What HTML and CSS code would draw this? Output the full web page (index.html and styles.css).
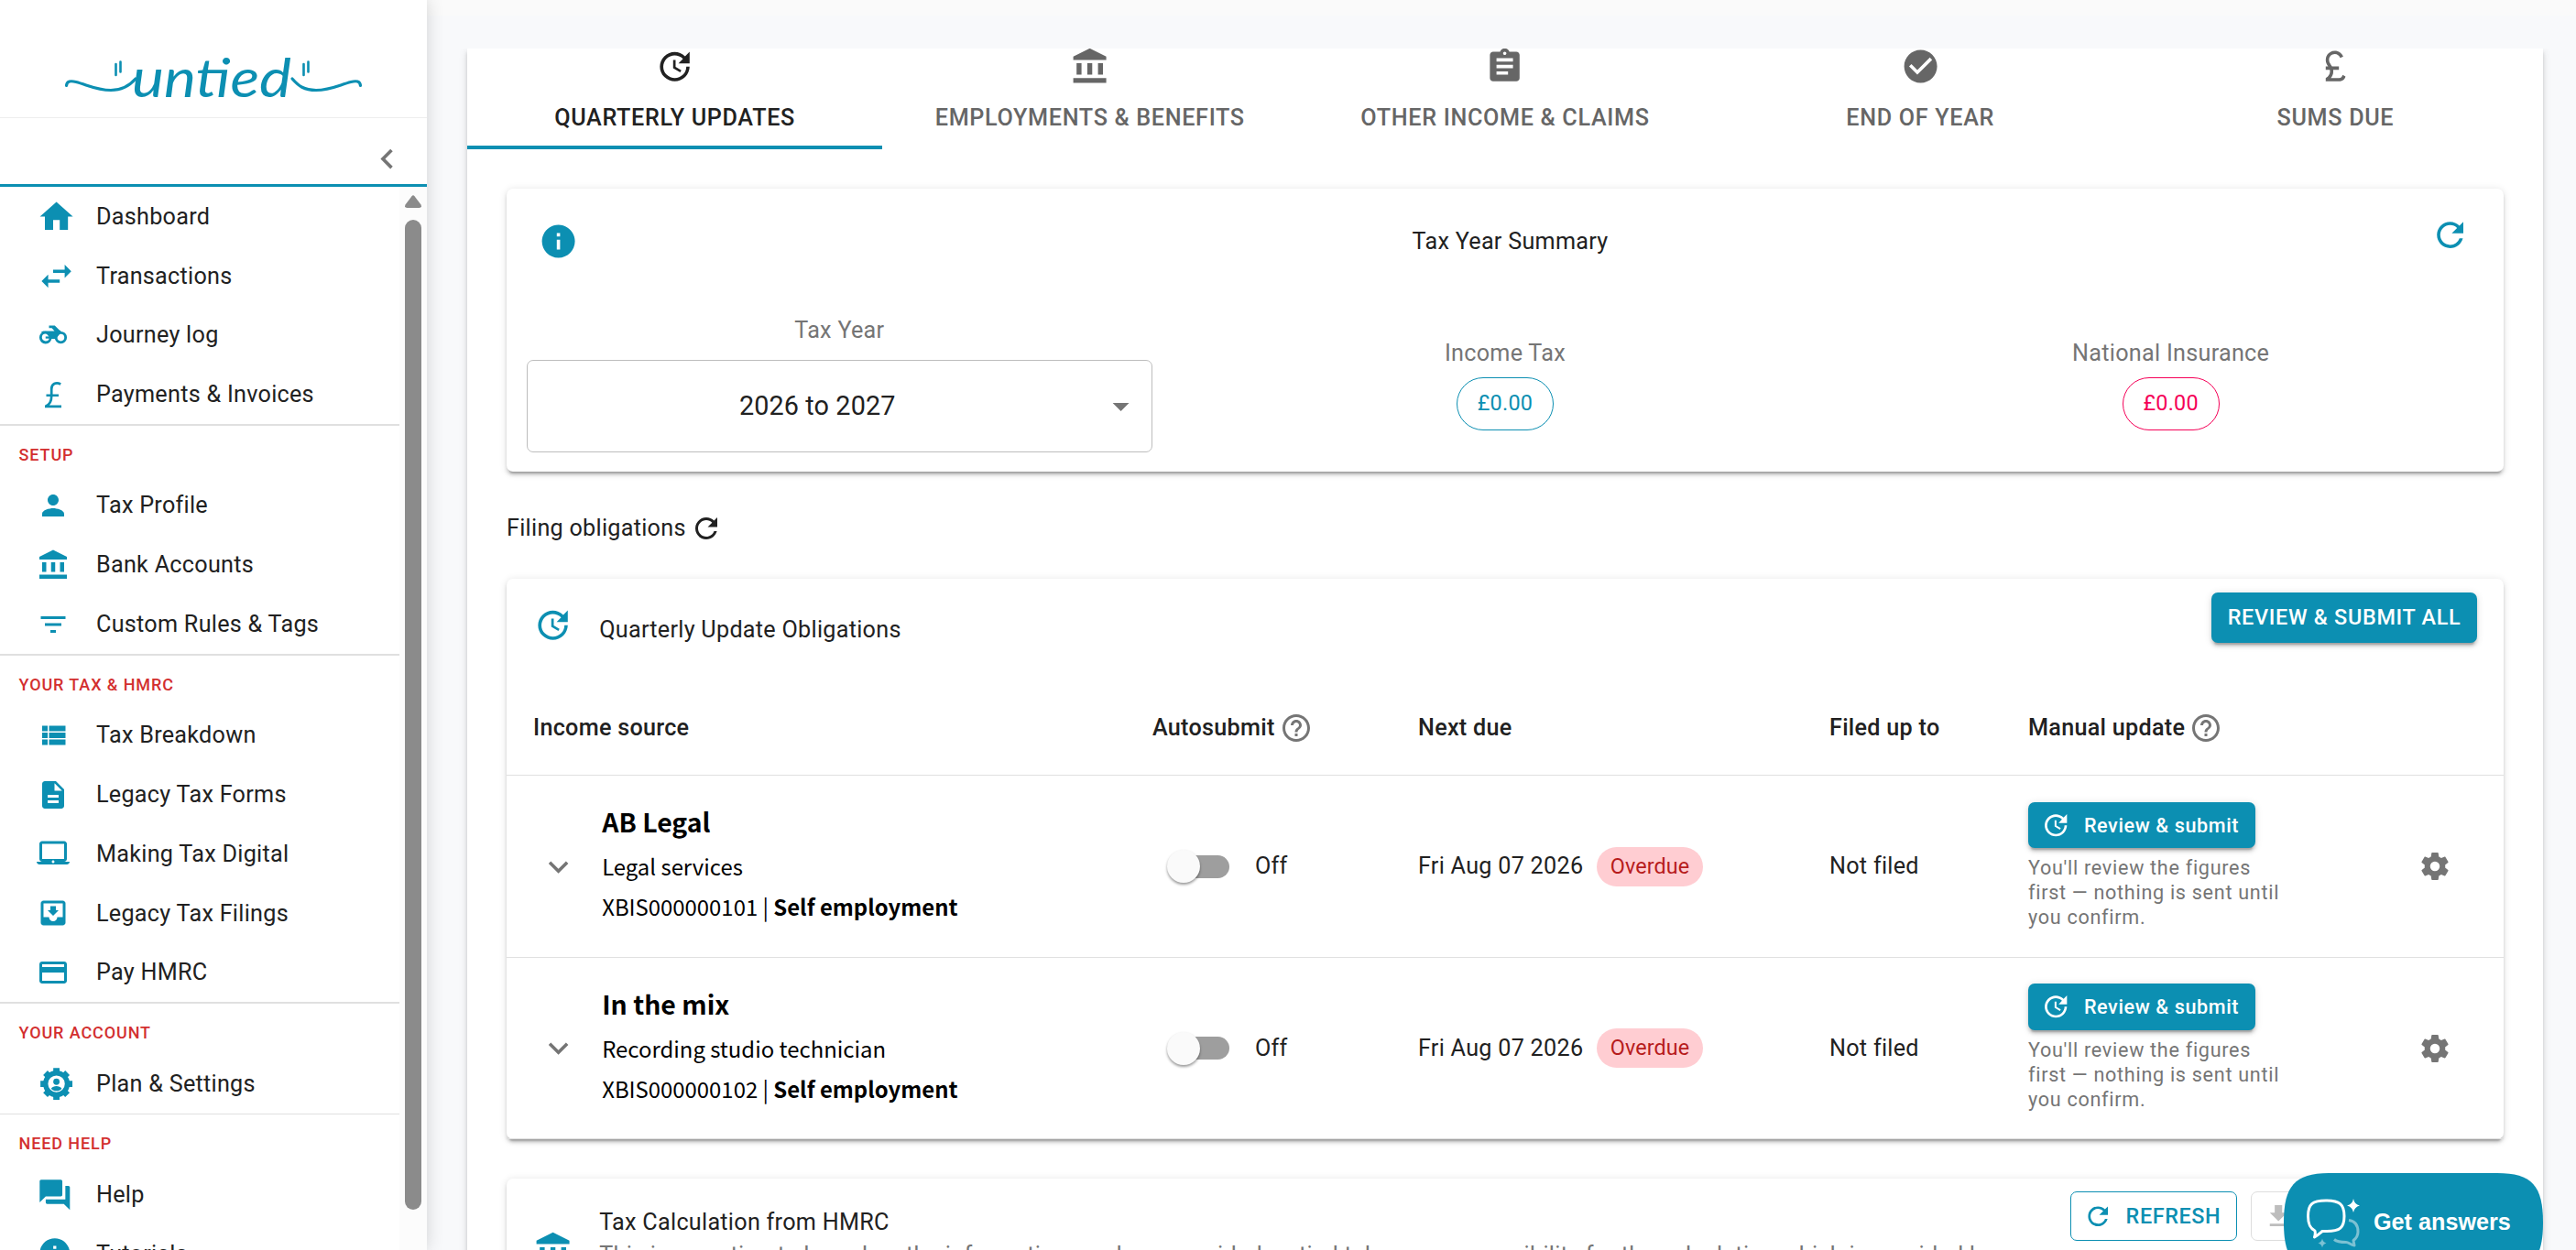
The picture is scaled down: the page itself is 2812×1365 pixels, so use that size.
FILE: index.html
```html
<!DOCTYPE html>
<html lang="en">

<head>
  <meta charset="UTF-8" />
  <title>untied - Quarterly updates</title>
  <link rel="stylesheet" href="styles.css">
</head>

<body>

<!-- Icon sprite -->
<svg class="sprite" xmlns="http://www.w3.org/2000/svg">
  <symbol id="i-home" viewBox="0 0 24 24"><path d="M10 20v-6h4v6h5v-8h3L12 3 2 12h3v8z"/></symbol>
  <symbol id="i-swap" viewBox="0 0 24 24"><path d="M6.99 11L3 15l3.99 4v-3H14v-2H6.99v-3zM21 9l-3.99-4v3H10v2h7.01v3L21 9z"/></symbol>
  <symbol id="i-bike" viewBox="0 0 24 24">
    <path d="M9 5h4.2l3.2 3.2 1.3.8-.5 1.6L14 14.6h-3.6L7 10.8 3 9.7 5 9h8l-2-2.2H9z"/>
    <g fill="none" stroke="currentColor" stroke-width="1.9">
      <circle cx="6.5" cy="13.7" r="3.6"/>
      <circle cx="17.6" cy="13.7" r="3.5"/>
      <path d="M6.5 13.7h4" stroke-width="1.5"/>
    </g>
  </symbol>
  <symbol id="i-gbp" viewBox="0 0 24 24"><path fill="none" stroke="currentColor" stroke-width="1.8" d="M17.5 4.3C14 2.6 10.8 4 10.8 8v5c0 3.5-1.5 6.300-4.100 7.300M7 12.500h9M6 20.600h12"/></symbol>
  <symbol id="i-pound" viewBox="0 0 24 24"><path d="M14 21c1.93 0 3.62-1.17 4-3l-1.75-.88C16 18.21 15.33 19 14 19H9.1c.83-1 1.5-2.34 1.5-4 0-.35-.03-.69-.08-1H14v-2H9.82C9 10.42 8 9.6 8 8c0-1.93 1.57-3.5 3.5-3.5 1.5 0 2.79.95 3.28 2.28L16.63 6c-.8-2.05-2.79-3.5-5.13-3.5C8.46 2.5 6 4.96 6 8c0 1.78.79 2.9 1.49 4H6v2h2.47c.08.31.13.64.13 1 0 2.7-2.6 4-2.6 4v2h8z"/></symbol>
  <symbol id="i-person" viewBox="0 0 24 24"><path d="M12 12c2.21 0 4-1.79 4-4s-1.790-4-4-4-4 1.790-4 4 1.790 4 4 4zm0 2c-2.670 0-8 1.340-8 4v2h16v-2c0-2.660-5.330-4-8-4z"/></symbol>
  <symbol id="i-bank" viewBox="0 0 24 24"><path d="M12 1L2 6v2h20V6zM4 10v7h3v-7zM10.500 10v7h3v-7zM17 10v7h3v-7zM2 19h20v3H2z"/></symbol>
  <symbol id="i-filter" viewBox="0 0 24 24"><path d="M10 18h4v-2h-4v2zM3 6v2h18V6H3zm3 7h12v-2H6v2z"/></symbol>
  <symbol id="i-list" viewBox="0 0 24 24"><path d="M4 14h4v-4H4v4zm0 5h4v-4H4v4zM4 9h4V5H4v4zm5 5h12v-4H9v4zm0 5h12v-4H9v4zM9 5v4h12V5H9z"/></symbol>
  <symbol id="i-doc" viewBox="0 0 24 24"><path d="M14 2H6c-1.100 0-1.990.9-1.990 2L4 20c0 1.100.89 2 1.990 2H18c1.100 0 2-.9 2-2V8l-6-6zm2 16H8v-2h8v2zm0-4H8v-2h8v2zm-3-5V3.500L18.500 9H13z"/></symbol>
  <symbol id="i-laptop" viewBox="0 0 24 24"><path d="M20 18c1.100 0 1.990-.9 1.990-2L22 5c0-1.100-.9-2-2-2H4c-1.100 0-2 .9-2 2v11c0 1.100.9 2 2 2H0c0 1.100.9 2 2 2h20c1.100 0 2-.9 2-2h-4zM4 5h16v11H4V5zm8 14c-.55 0-1-.45-1-1s.45-1 1-1 1 .45 1 1-.45 1-1 1z"/></symbol>
  <symbol id="i-inbox" viewBox="0 0 24 24"><path d="M19 3H4.990c-1.110 0-1.980.9-1.980 2L3 19c0 1.100.88 2 1.990 2H19c1.100 0 2-.9 2-2V5c0-1.100-.9-2-2-2zm0 12h-4c0 1.660-1.350 3-3 3s-3-1.340-3-3H4.990V5H19v10zm-3-5h-2V7h-4v3H8l4 4 4-4z"/></symbol>
  <symbol id="i-card" viewBox="0 0 24 24"><path d="M20 4H4c-1.110 0-1.990.89-1.990 2L2 18c0 1.110.89 2 2 2h16c1.110 0 2-.89 2-2V6c0-1.110-.89-2-2-2zm0 14H4v-6h16v6zm0-10H4V6h16v2z"/></symbol>
  <symbol id="i-plan" viewBox="0 0 24 24">
    <circle cx="12" cy="12" r="6.600" fill="none" stroke="currentColor" stroke-width="3"/>
    <path stroke="currentColor" stroke-width="3.800" stroke-linejoin="round" d="M12 2.300v3M12 18.700v3M2.300 12h3M18.700 12h3M5.300 5.300l2 2M16.700 16.700l2 2M5.300 18.700l2-2M16.700 7.300l2-2"/>
    <circle cx="12" cy="10.700" r="1.900"/>
    <path d="M8.800 14.900c.6-1.200 2-1.600 3.200-1.600s2.600.4 3.200 1.600C14.400 15.900 13.300 16.300 12 16.300s-2.400-.4-3.200-1.400z"/>
  </symbol>
  <symbol id="i-forum" viewBox="0 0 24 24"><path d="M21 6h-2v9H6v2c0 .55.45 1 1 1h11l4 4V7c0-.55-.45-1-1-1zm-4 6V3c0-.55-.45-1-1-1H3c-.55 0-1 .45-1 1v14l4-4h10c.55 0 1-.45 1-1z"/></symbol>
  <symbol id="i-info" viewBox="0 0 24 24"><path d="M12 2C6.480 2 2 6.480 2 12s4.480 10 10 10 10-4.480 10-10S17.520 2 12 2zm1 15h-2v-6h2v6zm0-8h-2V7h2v2z"/></symbol>
  <symbol id="i-left" viewBox="0 0 24 24"><path d="M15.410 7.410L14 6l-6 6 6 6 1.410-1.410L10.830 12z"/></symbol>
  <symbol id="i-down" viewBox="0 0 24 24"><path d="M7.410 8.590L12 13.170l4.590-4.580L18 10l-6 6-6-6 1.410-1.410z"/></symbol>
  <symbol id="i-drop" viewBox="0 0 24 24"><path d="M7 10l5 5 5-5z"/></symbol>
  <symbol id="i-update" viewBox="0 0 24 24"><path d="M21 10.120h-6.780l2.740-2.820c-2.730-2.700-7.150-2.800-9.880-.1-2.730 2.710-2.730 7.080 0 9.790s7.150 2.710 9.880 0C18.320 15.650 19 14.080 19 12.100h2c0 1.980-.88 4.550-2.640 6.290-3.510 3.480-9.210 3.480-12.720 0-3.500-3.470-3.530-9.110-.02-12.580s9.140-3.470 12.650 0L21 3v7.120zM12.500 8v4.250l3.500 2.080-.72 1.210L11 13V8h1.500z"/></symbol>
  <symbol id="i-refresh" viewBox="0 0 24 24"><path d="M17.650 6.350C16.200 4.900 14.210 4 12 4c-4.420 0-7.990 3.580-7.990 8s3.570 8 7.990 8c3.730 0 6.840-2.550 7.730-6h-2.080c-.82 2.330-3.040 4-5.650 4-3.310 0-6-2.690-6-6s2.690-6 6-6c1.660 0 3.140.69 4.220 1.780L13 11h7V4l-2.350 2.350z"/></symbol>
  <symbol id="i-assign" viewBox="0 0 24 24"><path d="M19 3h-4.180C14.400 1.840 13.300 1 12 1c-1.300 0-2.400.84-2.820 2H5c-1.100 0-2 .9-2 2v14c0 1.100.9 2 2 2h14c1.100 0 2-.9 2-2V5c0-1.100-.9-2-2-2zm-7 0c.55 0 1 .45 1 1s-.45 1-1 1-1-.45-1-1 .45-1 1-1zm2 14H7v-2h7v2zm3-4H7v-2h10v2zm0-4H7V7h10v2z"/></symbol>
  <symbol id="i-check" viewBox="0 0 24 24"><path d="M12 2C6.480 2 2 6.480 2 12s4.480 10 10 10 10-4.480 10-10S17.520 2 12 2zm-2 15l-5-5 1.410-1.410L10 14.170l7.590-7.590L19 8l-9 9z"/></symbol>
  <symbol id="i-help" viewBox="0 0 24 24"><path d="M11 18h2v-2h-2v2zm1-16C6.480 2 2 6.480 2 12s4.480 10 10 10 10-4.480 10-10S17.520 2 12 2zm0 18c-4.410 0-8-3.590-8-8s3.590-8 8-8 8 3.590 8 8-3.590 8-8 8zm0-14c-2.210 0-4 1.790-4 4h2c0-1.100.9-2 2-2s2 .9 2 2c0 2-3 1.750-3 5h2c0-2.250 3-2.500 3-5 0-2.210-1.790-4-4-4z"/></symbol>
  <symbol id="i-cog" viewBox="0 0 24 24"><path d="M12 15.500A3.500 3.500 0 0 1 8.500 12 3.500 3.500 0 0 1 12 8.500a3.500 3.500 0 0 1 3.500 3.500 3.500 3.500 0 0 1-3.500 3.500m7.430-2.530c.04-.32.07-.64.07-.97 0-.33-.03-.66-.07-1l2.110-1.630c.19-.15.24-.42.12-.64l-2-3.460c-.12-.22-.39-.31-.61-.22l-2.490 1c-.52-.39-1.060-.73-1.690-.98l-.37-2.650A.506.506 0 0 0 14 2h-4c-.25 0-.46.18-.5.42l-.37 2.650c-.63.25-1.170.59-1.690.98l-2.490-1c-.22-.09-.49 0-.61.22l-2 3.460c-.13.22-.07.49.12.64L4.570 11c-.04.34-.07.67-.07 1 0 .33.03.65.07.97l-2.110 1.660c-.19.15-.25.42-.12.64l2 3.460c.12.22.39.3.61.22l2.490-1.010c.52.4 1.060.74 1.690.99l.37 2.650c.04.24.25.42.5.42h4c.25 0 .46-.18.5-.42l.37-2.650c.63-.26 1.170-.59 1.690-.99l2.490 1.010c.22.08.49 0 .61-.22l2-3.460c.12-.22.07-.49-.12-.64l-2.110-1.660z"/></symbol>
  <symbol id="i-download" viewBox="0 0 24 24"><path d="M5 20h14v-2H5m14-9h-4V3H9v6H5l7 7 7-7z"/></symbol>
</svg>

<div class="app">

  <!-- Sidebar -->
  <aside class="sidebar">
    <div class="logo">
      <svg viewBox="0 0 466 128" width="466" height="128">
        <g fill="none" stroke="currentColor" stroke-width="3.200" stroke-linecap="round">
          <path d="M72.500 93.500C73 88.500 77 88 83 89.500C96 93 106 98.500 121 98.500C134 98.500 142 93 148 86"/>
          <path d="M393.500 93.500C393 88.500 389 88 383 89.500C370 93 360 98.500 345 98.500C332 98.500 326 94 319 86"/>
          <path d="M126.500 70v12M131.500 67.500v11M331.500 70v12M336.500 67.500v11" stroke-width="2.600"/>
        </g>
        <text class="wordmark" x="144" y="106" textLength="174" lengthAdjust="spacingAndGlyphs">untied</text>
      </svg>
    </div>
    <div class="collapse"><svg class="icon lg"><use href="#i-left"/></svg></div>

    <div class="nav-wrap">
      <nav class="nav">
        <a class="nav-item"><svg class="icon lg"><use href="#i-home"/></svg><span>Dashboard</span></a>
        <a class="nav-item"><svg class="icon lg"><use href="#i-swap"/></svg><span>Transactions</span></a>
        <a class="nav-item"><svg class="icon"><use href="#i-bike"/></svg><span>Journey log</span></a>
        <a class="nav-item"><svg class="icon"><use href="#i-gbp"/></svg><span>Payments &amp; Invoices</span></a>
        <div class="divider"></div>
        <div class="nav-title">SETUP</div>
        <a class="nav-item"><svg class="icon"><use href="#i-person"/></svg><span>Tax Profile</span></a>
        <a class="nav-item"><svg class="icon"><use href="#i-bank"/></svg><span>Bank Accounts</span></a>
        <a class="nav-item"><svg class="icon"><use href="#i-filter"/></svg><span>Custom Rules &amp; Tags</span></a>
        <div class="divider"></div>
        <div class="nav-title">YOUR TAX &amp; HMRC</div>
        <a class="nav-item"><svg class="icon"><use href="#i-list"/></svg><span>Tax Breakdown</span></a>
        <a class="nav-item"><svg class="icon"><use href="#i-doc"/></svg><span>Legacy Tax Forms</span></a>
        <a class="nav-item"><svg class="icon"><use href="#i-laptop"/></svg><span>Making Tax Digital</span></a>
        <a class="nav-item"><svg class="icon"><use href="#i-inbox"/></svg><span>Legacy Tax Filings</span></a>
        <a class="nav-item"><svg class="icon"><use href="#i-card"/></svg><span>Pay HMRC</span></a>
        <div class="divider"></div>
        <div class="nav-title">YOUR ACCOUNT</div>
        <a class="nav-item"><svg class="icon lg"><use href="#i-plan"/></svg><span>Plan &amp; Settings</span></a>
        <div class="divider"></div>
        <div class="nav-title">NEED HELP</div>
        <a class="nav-item"><svg class="icon md"><use href="#i-forum"/></svg><span>Help</span></a>
        <a class="nav-item"><svg class="icon md"><use href="#i-info"/></svg><span>Tutorials</span></a>
      </nav>
      <div class="scrollbar">
        <svg class="scroll-up" viewBox="0 0 18 14"><path d="M7.500 1.200Q9-.6 10.500 1.200L17.500 10.500Q19 14 15.500 14H2.500Q-1 14 .5 10.500z"/></svg>
        <div class="scroll-thumb"></div>
      </div>
    </div>
  </aside>

  <!-- Main content -->
  <main class="main">
    <div class="topbar"></div>
    <div class="panel">
      <div class="tabs">
        <div class="tab active"><svg class="icon lg"><use href="#i-update"/></svg>QUARTERLY UPDATES</div>
        <div class="tab"><svg class="icon lg"><use href="#i-bank"/></svg>EMPLOYMENTS &amp; BENEFITS</div>
        <div class="tab"><svg class="icon lg"><use href="#i-assign"/></svg>OTHER INCOME &amp; CLAIMS</div>
        <div class="tab"><svg class="icon lg"><use href="#i-check"/></svg>END OF YEAR</div>
        <div class="tab"><svg class="icon lg"><use href="#i-pound"/></svg>SUMS DUE</div>
      </div>

      <div class="content">
        <!-- Tax year summary -->
        <section class="card summary">
          <div class="summary-head">
            <svg class="icon lg teal"><use href="#i-info"/></svg>
            <div class="summary-title">Tax Year Summary</div>
            <svg class="icon lg teal summary-refresh"><use href="#i-refresh"/></svg>
          </div>
          <div class="summary-cols">
            <div class="summary-col">
              <div class="label">Tax Year</div>
              <div class="select"><span>2026 to 2027</span><svg class="icon lg"><use href="#i-drop"/></svg></div>
            </div>
            <div class="summary-col">
              <div class="label">Income Tax</div>
              <div class="amount">£0.00</div>
            </div>
            <div class="summary-col">
              <div class="label">National Insurance</div>
              <div class="amount pink">£0.00</div>
            </div>
          </div>
        </section>

        <div class="filing">Filing obligations <svg class="icon"><use href="#i-refresh"/></svg></div>

        <!-- Obligations -->
        <section class="card obligations">
          <div class="ob-head">
            <svg class="icon lg teal"><use href="#i-update"/></svg>
            <div class="ob-title">Quarterly Update Obligations</div>
            <button class="btn btn-all">REVIEW &amp; SUBMIT ALL</button>
          </div>
          <table class="ob-table">
            <colgroup>
              <col class="c-source"><col class="c-auto"><col class="c-due"><col class="c-filed"><col class="c-manual"><col>
            </colgroup>
            <thead>
              <tr>
                <th class="first">Income source</th>
                <th><span class="th-help">Autosubmit <svg class="icon"><use href="#i-help"/></svg></span></th>
                <th>Next due</th>
                <th>Filed up to</th>
                <th><span class="th-help">Manual update <svg class="icon"><use href="#i-help"/></svg></span></th>
                <th></th>
              </tr>
            </thead>
            <tbody>
              <tr>
                <td>
                  <div class="source">
                    <svg class="icon lg"><use href="#i-down"/></svg>
                    <div class="source-text">
                      <div class="source-name">AB Legal</div>
                      <div>Legal services</div>
                      <div>XBIS000000101 | <b>Self employment</b></div>
                    </div>
                  </div>
                </td>
                <td><div class="auto"><span class="switch"><i></i></span>Off</div></td>
                <td><div class="due">Fri Aug 07 2026 <span class="overdue">Overdue</span></div></td>
                <td>Not filed</td>
                <td>
                  <button class="btn btn-review"><svg class="icon sm"><use href="#i-update"/></svg>Review &amp; submit</button>
                  <div class="hint">You'll review the figures first — nothing is sent until you confirm.</div>
                </td>
                <td class="cog"><svg class="icon"><use href="#i-cog"/></svg></td>
              </tr>
              <tr>
                <td>
                  <div class="source">
                    <svg class="icon lg"><use href="#i-down"/></svg>
                    <div class="source-text">
                      <div class="source-name">In the mix</div>
                      <div>Recording studio technician</div>
                      <div>XBIS000000102 | <b>Self employment</b></div>
                    </div>
                  </div>
                </td>
                <td><div class="auto"><span class="switch"><i></i></span>Off</div></td>
                <td><div class="due">Fri Aug 07 2026 <span class="overdue">Overdue</span></div></td>
                <td>Not filed</td>
                <td>
                  <button class="btn btn-review"><svg class="icon sm"><use href="#i-update"/></svg>Review &amp; submit</button>
                  <div class="hint">You'll review the figures first — nothing is sent until you confirm.</div>
                </td>
                <td class="cog"><svg class="icon"><use href="#i-cog"/></svg></td>
              </tr>
            </tbody>
          </table>
        </section>

        <!-- Tax calculation -->
        <section class="card calc">
          <svg class="icon lg teal"><use href="#i-bank"/></svg>
          <div class="calc-text">
            <div>Tax Calculation from HMRC</div>
            <div class="calc-sub">This is an estimate based on the information you have provided, untied takes no responsibility for the calculation which is provided by</div>
          </div>
          <div class="calc-actions">
            <button class="btn-outline"><svg class="icon sm"><use href="#i-refresh"/></svg>REFRESH</button>
            <button class="btn-outline disabled"><svg class="icon sm"><use href="#i-download"/></svg></button>
          </div>
        </section>
      </div>
    </div>
  </main>
</div>

<!-- Chat launcher -->
<div class="chat">
  <svg class="chat-bg" viewBox="0 0 283 108" preserveAspectRatio="none"><path d="M0 54C0 14 12 0 50 0H233C271 0 283 14 283 54S271 108 233 108H50C12 108 0 94 0 54z"/></svg>
  <svg class="chat-icon" viewBox="0 0 58 54">
    <path class="bubble" d="M9 35C3 32 1.500 27 1.500 19C1.500 6 6 2 21 2S41 6 41 19S36 35.500 22 35.500H17C14 38 12 40 8.500 42C9.500 39 9.500 37 9 35z"/>
    <path class="bubble faint" d="M46 23.500C54 24.500 56 30 56 36C56 40 54.500 43 51 45.500L52 51C48 50.500 46 47.500 43 47.500C37 47.500 33 47 30 44.500"/>
    <path d="M51 0Q52 6 58 7.500Q52 9 51 15Q50 9 44 7.500Q50 6 51 0z"/>
    <path class="faint-fill" d="M17 43.500Q17.700 47.500 21.500 48.500Q17.700 49.500 17 53.500Q16.300 49.500 12.500 48.500Q16.300 47.500 17 43.500z"/>
  </svg>
  <span>Get answers</span>
</div>

</body>
</html>
```
FILE: styles.css
```css
* {
  box-sizing: border-box;
}
body {
  margin: 0;
  height: 1365px;
  overflow: hidden;
  font-family: Roboto, "Liberation Sans", sans-serif;
  font-size: 25.2px;
  letter-spacing: 0.27px;
  line-height: 36px;
  color: #212121;
  background: #f8f9fb;
}
button {
  font-family: inherit;
  border: none;
  padding: 0;
}
.sprite {
  display: none;
}
.icon {
  width: 36px;
  height: 36px;
  flex: none;
  fill: currentColor;
}
.icon.sm {
  width: 32.4px;
  height: 32.4px;
}
.icon.md {
  width: 39.6px;
  height: 39.6px;
}
.icon.lg {
  width: 43.2px;
  height: 43.2px;
}
.teal {
  color: #0c8fb2;
}
.app {
  display: flex;
  height: 1365px;
}

/* Sidebar */
.sidebar {
  position: relative;
  z-index: 2;
  width: 466px;
  flex: none;
  display: flex;
  flex-direction: column;
  background: #fff;
  box-shadow: 0 0 18px rgba(0, 0, 0, 0.16);
}
.logo {
  height: 129px;
  border-bottom: 1px solid #eee;
  color: #0c8fb2;
}
.logo svg {
  display: block;
}
.wordmark {
  font-family: Lato, sans-serif;
  font-style: italic;
  font-size: 58px;
  letter-spacing: 0;
  fill: currentColor;
}
.collapse {
  height: 75px;
  display: flex;
  justify-content: flex-end;
  align-items: center;
  padding: 17px 22px 0 0;
  border-bottom: 3px solid #0c8fb2;
  color: #757575;
}
.nav-wrap {
  flex: 1;
  min-height: 0;
  display: flex;
}
.nav {
  width: 436px;
  overflow: hidden;
}
.nav-item {
  display: flex;
  align-items: center;
  height: 64.8px;
  padding-left: 40px;
}
.nav-item .icon {
  color: #0c8fb2;
}
.nav-item span {
  margin-left: auto;
  padding-top: 1px;
  width: 331px;
}
.divider {
  height: 1.8px;
  background: #e0e0e0;
}
.nav-title {
  height: 54.6px;
  line-height: 64px;
  padding-left: 20.5px;
  font-size: 18px;
  font-weight: 500;
  letter-spacing: 0.9px;
  color: #d32f2f;
}
.scrollbar {
  width: 30px;
  background: #fcfcfc;
  padding: 9px 6px 0;
}
.scroll-up {
  display: block;
  width: 18px;
  height: 14px;
  fill: #8b8b8b;
}
.scroll-thumb {
  margin-top: 13px;
  height: 1081px;
  border-radius: 9px;
  background: #8b8b8b;
}

/* Main */
.main {
  flex: 1;
  min-width: 0;
  overflow: hidden;
}
.topbar {
  height: 17px;
  margin-bottom: 36px;
  background: #fafafa;
}
.panel {
  margin: 0 36px 0 44px;
  height: 1400px;
  background: #fff;
  box-shadow: 0 4.5px 2px -3.6px rgba(0, 0, 0, 0.2), 0 3.6px 3.6px rgba(0, 0, 0, 0.14), 0 1.8px 9px rgba(0, 0, 0, 0.12);
  clip-path: inset(0 -20px -20px -20px);
}
.tabs {
  display: flex;
  height: 110px;
}
.tab {
  flex: 1;
  display: flex;
  flex-direction: column;
  align-items: center;
  font-weight: 500;
  letter-spacing: 0.66px;
  color: #666;
}
.tab .icon {
  margin: -2px 0 17px;
}
.tab.active {
  color: #212121;
  border-bottom: 4px solid #0c8fb2;
}
.content {
  padding: 42.7px 43px 0;
}
.card {
  border-radius: 7px;
  background: #fff;
  box-shadow: 0 5.4px 1.8px -3.6px rgba(0, 0, 0, 0.2), 0 3.6px 3.6px rgba(0, 0, 0, 0.14), 0 1.8px 9px rgba(0, 0, 0, 0.12);
}

/* Tax year summary */
.summary {
  height: 309.3px;
}
.summary-head {
  display: flex;
  align-items: center;
  height: 116px;
  padding: 0 37px 0 35px;
}
.summary-title {
  flex: 1;
  margin-left: 13px;
  text-align: center;
}
.summary-refresh {
  margin-bottom: 14px;
}
.summary-cols {
  display: grid;
  grid-template-columns: repeat(3, 1fr);
  align-items: center;
  padding-top: 21px;
}
.summary-col {
  display: flex;
  flex-direction: column;
  align-items: center;
  padding: 0 22px;
}
.label {
  color: #757575;
}
.select {
  width: 100%;
  height: 101px;
  margin-top: 14px;
  display: flex;
  align-items: center;
  border: 1.8px solid #bdbdbd;
  border-radius: 7px;
  padding: 0 11px 0 6px;
  font-size: 28.8px;
  letter-spacing: 0.1px;
}
.select span {
  flex: 1;
  text-align: center;
}
.select .icon {
  color: #757575;
}
.amount {
  height: 57.6px;
  margin: 8px 0 -2px;
  padding: 0 21.6px;
  border: 1.8px solid #0c8fb2;
  border-radius: 29px;
  font-size: 23.4px;
  line-height: 54px;
  color: #0c8fb2;
}
.amount.pink {
  border-color: #f50057;
  color: #f50057;
}
.filing {
  display: flex;
  align-items: center;
  gap: 4px;
  height: 117px;
  padding: 7px 0 0;
}

/* Obligations */
.ob-head {
  display: flex;
  align-items: flex-start;
  height: 110px;
  padding: 0 29px;
}
.ob-head .icon {
  margin-top: 29.5px;
}
.ob-title {
  flex: 1;
  margin: 38px 0 0 29px;
}
.btn {
  display: flex;
  align-items: center;
  justify-content: center;
  border-radius: 7px;
  background: #0c8fb2;
  color: #fff;
  font-weight: 500;
  white-space: nowrap;
  box-shadow: 0 5.4px 1.8px -3.6px rgba(0, 0, 0, 0.2), 0 3.6px 3.6px rgba(0, 0, 0, 0.14), 0 1.8px 9px rgba(0, 0, 0, 0.12);
}
.btn-all {
  width: 290px;
  height: 55px;
  margin-top: 15px;
  font-size: 23.4px;
  letter-spacing: 0.7px;
}
.ob-table {
  width: 100%;
  table-layout: fixed;
  border-collapse: collapse;
}
.c-source { width: 705px; }
.c-auto { width: 290px; }
.c-due { width: 449px; }
.c-filed { width: 217px; }
.c-manual { width: 401px; }
.ob-table th,
.ob-table td {
  padding: 0;
  text-align: left;
  border-bottom: 1.8px solid #e0e0e0;
}
.ob-table th {
  height: 105px;
  padding-top: 1px;
  font-weight: 500;
}
.ob-table th.first {
  padding-left: 29px;
}
.ob-table td {
  height: 198.4px;
}
.th-help {
  display: flex;
  align-items: center;
  gap: 5px;
}
.th-help .icon,
.source .icon,
.cog {
  color: #757575;
}
.source {
  display: flex;
  align-items: center;
  padding-left: 35px;
}
.source-text {
  margin: 0 0 11px 26px;
  font-family: "Noto Sans CJK JP", sans-serif;
  font-size: 23.9px;
  letter-spacing: 0;
  line-height: 43.8px;
  color: #000;
}
.source-name {
  font-size: 28.4px;
  font-weight: 700;
  line-height: 55px;
}
.auto {
  display: flex;
  align-items: center;
  padding-left: 15.6px;
  gap: 28px;
}
.switch {
  width: 68.4px;
  height: 25.2px;
  padding-left: 3.6px;
}
.switch::before {
  content: "";
  display: block;
  height: 25.2px;
  border-radius: 13px;
  background: #9e9e9e;
}
.switch i {
  display: block;
  width: 36px;
  height: 36px;
  margin: -30.6px 0 0 -3.6px;
  border-radius: 50%;
  background: #fafafa;
  box-shadow: 0 2px 3px rgba(0, 0, 0, 0.4);
}
.due {
  display: flex;
  align-items: center;
  gap: 15px;
}
.overdue {
  height: 43.2px;
  padding: 0 14.4px;
  border-radius: 22px;
  background: #ffcdd2;
  color: #b71c1c;
  font-size: 23.4px;
  letter-spacing: 0.1px;
  line-height: 42px;
}
.btn-review {
  width: 248px;
  height: 50.4px;
  margin-top: -1px;
  padding-left: 14px;
  justify-content: flex-start;
  font-size: 21.6px;
  letter-spacing: 0.6px;
  gap: 14.5px;
}
.hint {
  width: 290px;
  margin-top: 8px;
  font-size: 21.6px;
  line-height: 27px;
  letter-spacing: 0.7px;
  color: #757575;
}
.ob-table .cog {
  padding-left: 24.5px;
}
.cog .icon {
  display: block;
}

/* Tax calculation */
.calc {
  display: flex;
  align-items: flex-start;
  height: 260px;
  margin-top: 43px;
  padding: 0 29px 0 29px;
}
.calc > .icon {
  margin-top: 57px;
}
.calc-text {
  width: 1560px;
  margin: 30px 0 0 29px;
}
.calc-sub {
  color: #757575;
  white-space: nowrap;
}
.calc-actions {
  display: flex;
  gap: 15px;
  margin: 14px 0 0 46px;
}
.btn-outline {
  display: flex;
  align-items: center;
  gap: 14px;
  width: 182px;
  height: 54px;
  padding: 0 0 0 13px;
  border: 1.8px solid #0c8fb2;
  border-radius: 7px;
  background: #fff;
  color: #0c8fb2;
  font-size: 23.4px;
  font-weight: 500;
  letter-spacing: 0.6px;
}
.btn-outline.disabled {
  border-color: #ddd;
  color: #bdbdbd;
}

/* Chat launcher */
.chat {
  position: absolute;
  z-index: 3;
  left: 2493px;
  top: 1281px;
  width: 283px;
  height: 84px;
  overflow: hidden;
  color: #fff;
}
.chat-bg {
  position: absolute;
  left: 0;
  top: 0;
  width: 283px;
  height: 108px;
  fill: #0c8fb2;
}
.chat-icon {
  position: absolute;
  left: 25px;
  top: 28px;
  width: 58px;
  height: 54px;
  fill: #fff;
}
.bubble {
  fill: none;
  stroke: #fff;
  stroke-width: 3;
  stroke-linejoin: round;
}
.faint {
  stroke: #7cc1d3;
}
.faint-fill {
  fill: #7cc1d3;
}
.chat span {
  position: absolute;
  left: 98px;
  top: 35px;
  font-family: "Liberation Sans", Arial, sans-serif;
  font-size: 25.2px;
  font-weight: 700;
  letter-spacing: 0;
  white-space: nowrap;
}
```
